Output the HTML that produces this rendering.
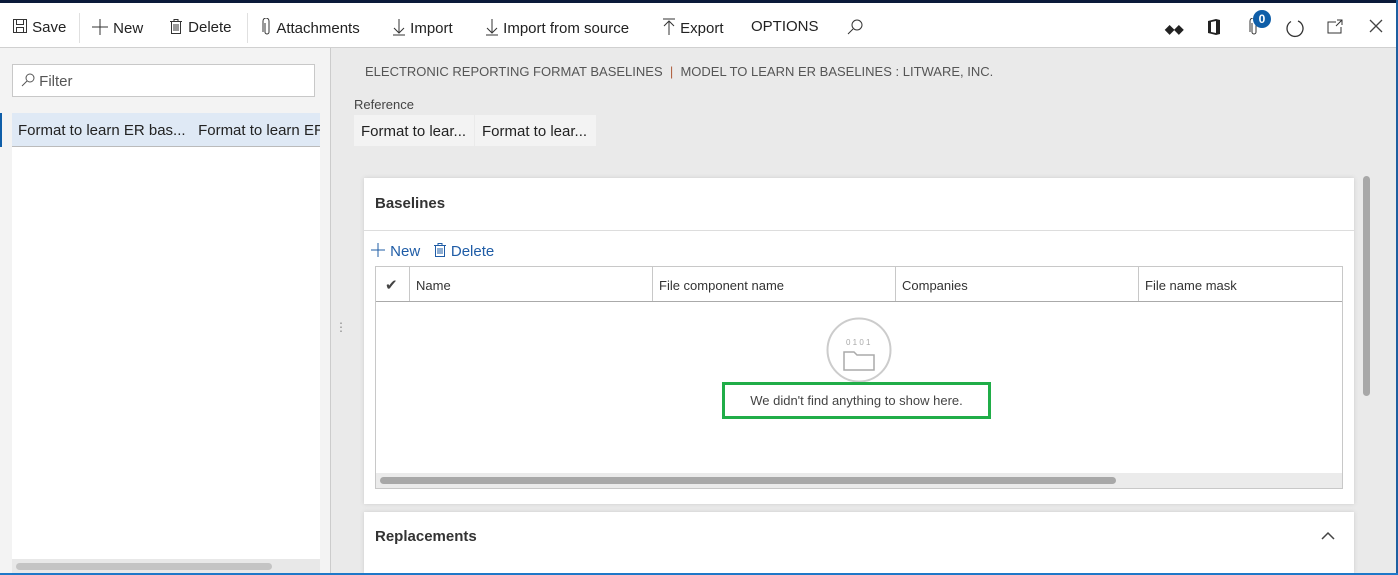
<!DOCTYPE html>
<html><head><style>
*{box-sizing:border-box;margin:0;padding:0}
body{width:1398px;height:575px;overflow:hidden;font-family:"Liberation Sans",sans-serif;background:#eaeaea;position:relative;color:#222}
.a{position:absolute}
.tb{top:0;left:0;width:1398px;height:48px;background:#fff;border-top:3px solid #0b1a3a;border-bottom:1px solid #d0d0d0}
.ti{position:absolute;top:15px;font-size:15px;color:#222;white-space:nowrap}
.sep{position:absolute;top:10px;width:1px;height:30px;background:#e0e0e0}
</style></head><body>
<div class="a tb">
 <span class="ti" style="left:12px"><svg width="16" height="16" style="vertical-align:-2px"><rect x="1.5" y="1.5" width="13" height="13" fill="none" stroke="#333"/><rect x="4.5" y="1.5" width="7" height="5" fill="none" stroke="#333"/><rect x="4.5" y="9.5" width="7" height="5" fill="none" stroke="#333"/></svg> Save</span>
 <div class="sep" style="left:79px"></div>
 <span class="ti" style="left:91px"><svg width="18" height="18" style="vertical-align:-3px"><path d="M9 1v16M1 9h16" stroke="#333"/></svg> New</span>
 <span class="ti" style="left:168px"><svg width="16" height="17" style="vertical-align:-3px"><path d="M2 3.5h12M6 3.5V1.5h4v2M3.5 3.5v12h9v-12M6 6v7M8 6v7M10 6v7" fill="none" stroke="#333"/></svg> Delete</span>
 <div class="sep" style="left:247px"></div>
 <span class="ti" style="left:261px"><svg width="12" height="18" style="vertical-align:-3px"><path d="M4 5v9a2 2 0 004 0V3a3 3 0 00-6 0v11" fill="none" stroke="#333"/></svg> Attachments</span>
 <span class="ti" style="left:392px"><svg width="14" height="18" style="vertical-align:-3px"><path d="M7 1v14M2 10l5 5 5-5M1 17h12" fill="none" stroke="#333"/></svg> Import</span>
 <span class="ti" style="left:485px"><svg width="14" height="18" style="vertical-align:-3px"><path d="M7 1v14M2 10l5 5 5-5M1 17h12" fill="none" stroke="#333"/></svg> Import from source</span>
 <span class="ti" style="left:662px"><svg width="14" height="18" style="vertical-align:-3px"><path d="M7 17V3M2 8l5-5 5 5M1 1h12" fill="none" stroke="#333"/></svg> Export</span>
 <span class="ti" style="left:751px">OPTIONS</span>
 <span class="ti" style="left:846px"><svg width="18" height="18"><circle cx="11" cy="7" r="5" fill="none" stroke="#333"/><path d="M7 11l-5 5" stroke="#333"/></svg></span>
 <span class="ti" style="left:1165px;top:19px;font-size:12px;font-weight:bold">◆◆</span>
 <span class="ti" style="left:1206px"><svg width="16" height="18"><path d="M2 3l8-2 4 1v14l-4 1-8-2zM5 4v10l5 1V3z" fill="#222"/></svg></span>
 <span class="ti" style="left:1248px"><svg width="12" height="18"><path d="M4 5v9a2 2 0 004 0V3a3 3 0 00-6 0v11" fill="none" stroke="#333"/></svg></span>
 <div class="a" style="left:1253px;top:7px;width:18px;height:18px;border-radius:9px;background:#0f5ea8;color:#fff;font-size:12px;font-weight:bold;text-align:center;line-height:18px">0</div>
 <span class="ti" style="left:1285px"><svg width="20" height="20"><path d="M6 3.5A8 8 0 1 0 13 3" fill="none" stroke="#333" stroke-width="1.3"/></svg></span>
 <span class="ti" style="left:1326px"><svg width="18" height="18"><path d="M10 4H2v11h13V9M11 2h5v5M16 2l-6 6" fill="none" stroke="#333"/></svg></span>
 <span class="ti" style="left:1368px"><svg width="16" height="16"><path d="M2 2l12 12M14 2L2 14" stroke="#444" stroke-width="1.3"/></svg></span>
</div>
<div class="a" style="left:0;top:48px;width:331px;height:525px;background:#f3f3f3;border-right:1px solid #ccc"></div>
<div class="a" style="left:12px;top:64px;width:303px;height:33px;background:#fff;border:1px solid #c8c8c8;font-size:15px;color:#555;padding:8px 0 0 8px"><svg width="14" height="14" style="vertical-align:-1px"><circle cx="9" cy="5" r="4" fill="none" stroke="#555"/><path d="M6 8l-5 5" stroke="#555"/></svg> Filter</div>
<div class="a" style="left:12px;top:113px;width:308px;height:446px;background:#fff"></div>
<div class="a" style="left:12px;top:113px;width:308px;height:34px;background:#dfe9f5;border-bottom:1px solid #bbb;font-size:15px;padding:9px 0 0 6px;white-space:nowrap;overflow:hidden">Format to learn ER bas...&nbsp;&nbsp;&nbsp;Format to learn ER</div>
<div class="a" style="left:0;top:113px;width:2px;height:34px;background:#0f5ea8"></div>
<div class="a" style="left:12px;top:559px;width:308px;height:14px;background:#e8e8e8"></div>
<div class="a" style="left:16px;top:563px;width:256px;height:7px;border-radius:4px;background:#c4c4c4"></div>
<div class="a" style="left:335px;top:320px;font-size:12px;color:#888">⋮</div>
<div class="a" style="left:365px;top:64px;font-size:13px;color:#555;white-space:nowrap">ELECTRONIC REPORTING FORMAT BASELINES &nbsp;<span style="color:#b06040">|</span>&nbsp; MODEL TO LEARN ER BASELINES : LITWARE, INC.</div>
<div class="a" style="left:354px;top:97px;font-size:13px;color:#444">Reference</div>
<div class="a" style="left:354px;top:115px;width:120px;height:31px;background:#f3f3f3;font-size:15px;padding:8px 0 0 7px">Format to lear...</div>
<div class="a" style="left:475px;top:115px;width:121px;height:31px;background:#f3f3f3;font-size:15px;padding:8px 0 0 7px">Format to lear...</div>
<div class="a" style="left:364px;top:178px;width:990px;height:326px;background:#fff;box-shadow:0 0 4px #ccc"></div>
<div class="a" style="left:375px;top:195px;font-size:15px;font-weight:bold;color:#333">Baselines</div>
<div class="a" style="left:364px;top:230px;width:990px;height:1px;background:#ddd"></div>
<div class="a" style="left:370px;top:242px;font-size:15px;color:#1f5ca6;white-space:nowrap"><svg width="16" height="16" style="vertical-align:-2px"><path d="M8 1v14M1 8h14" stroke="#1f5ca6"/></svg> New &nbsp;&nbsp;<svg width="14" height="16" style="vertical-align:-2px"><path d="M1 3.5h12M5 3.5V1.5h4v2M2.5 3.5v11h9v-11M5 6v6M7 6v6M9 6v6" fill="none" stroke="#1f5ca6"/></svg> Delete</div>
<div class="a" style="left:375px;top:266px;width:968px;height:223px;border:1px solid #c8c8c8;background:#fff"></div>
<div class="a" style="left:376px;top:301px;width:966px;height:1px;background:#aaa"></div>
<div class="a" style="left:385px;top:276px;font-size:15px;color:#444">✔</div>
<div class="a" style="left:409px;top:267px;width:1px;height:34px;background:#c8c8c8"></div>
<div class="a" style="left:652px;top:267px;width:1px;height:34px;background:#c8c8c8"></div>
<div class="a" style="left:895px;top:267px;width:1px;height:34px;background:#c8c8c8"></div>
<div class="a" style="left:1138px;top:267px;width:1px;height:34px;background:#c8c8c8"></div>
<div class="a" style="left:416px;top:278px;font-size:13px;color:#333">Name</div>
<div class="a" style="left:659px;top:278px;font-size:13px;color:#333">File component name</div>
<div class="a" style="left:902px;top:278px;font-size:13px;color:#333">Companies</div>
<div class="a" style="left:1145px;top:278px;font-size:13px;color:#333">File name mask</div>
<svg class="a" style="left:826px;top:317px" width="66" height="66"><circle cx="33" cy="33" r="31.5" fill="none" stroke="#ccc" stroke-width="2"/><path d="M18 35h10l3 3h17v15H18z" fill="none" stroke="#aaa" stroke-width="1.5"/><text x="20" y="28" font-size="8" fill="#aaa" font-family="Liberation Sans">0 1 0 1</text></svg>
<div class="a" style="left:722px;top:382px;width:269px;height:37px;border:3px solid #20ad48;font-size:13px;color:#444;text-align:center;padding-top:8px">We didn't find anything to show here.</div>
<div class="a" style="left:376px;top:473px;width:966px;height:15px;background:#ebebeb"></div>
<div class="a" style="left:380px;top:477px;width:736px;height:7px;border-radius:4px;background:#a8a8a8"></div>
<div class="a" style="left:364px;top:512px;width:990px;height:61px;background:#fff;box-shadow:0 0 4px #ccc"></div>
<div class="a" style="left:375px;top:528px;font-size:15px;font-weight:bold;color:#333">Replacements</div>
<svg class="a" style="left:1321px;top:531px" width="14" height="10"><path d="M1 8l6-6 6 6" fill="none" stroke="#444" stroke-width="1.5"/></svg>
<div class="a" style="left:1363px;top:176px;width:7px;height:220px;border-radius:4px;background:#a8a8a8"></div>
<div class="a" style="left:1396px;top:0;width:2px;height:575px;background:#1e5fa0"></div>
<div class="a" style="left:0;top:573px;width:1398px;height:2px;background:#1e78c8"></div>
</body></html>
